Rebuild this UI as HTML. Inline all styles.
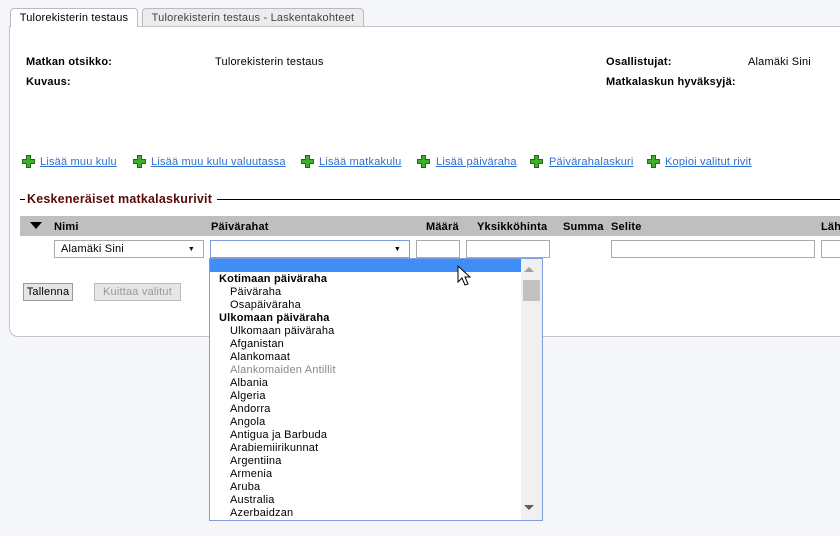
<!DOCTYPE html>
<html><head><meta charset="utf-8"><style>
*{margin:0;padding:0;box-sizing:border-box}
body{width:840px;height:536px;overflow:hidden;background:#f4f6f9;font-family:"Liberation Sans",Tahoma,sans-serif;font-size:11px;color:#000;position:relative;letter-spacing:0.2px}
.a{position:absolute;white-space:nowrap}
.b{font-weight:bold}
.tab{position:absolute;border:1px solid #bbb;border-bottom:none;border-radius:4px 4px 0 0;text-align:center;line-height:18px}
.panel{position:absolute;left:9px;top:26px;width:840px;height:311px;background:#fff;border:1px solid #c4c4c4;border-radius:0 0 0 9px}
.lnk{position:absolute;top:156px;color:#2f6fd0;text-decoration:underline;line-height:13px}
.plus{position:absolute;top:155px;width:13px;height:13px}
.inp{position:absolute;top:240px;height:18px;border:1px solid #aaa;background:#fff}
.sel{position:absolute;top:240px;height:18px;border:1px solid #aaa;background:#fff;padding-left:6px;line-height:17px}
.sel i{position:absolute;right:8px;top:0;font-style:normal;font-size:7px}
.dd{position:absolute;left:209px;top:258px;width:334px;height:263px;background:#fff;border:1px solid #7f9ddb}
.dd div{height:13px;line-height:14px;padding-left:9px}
.dd .o{padding-left:20px}
.btn{position:absolute;top:283px;height:18px;border:1px solid #999;background:#e6e6e6;line-height:17px;text-align:center}
</style></head><body>
<div class="panel"></div>
<div class="tab" style="left:10px;top:8px;width:128px;height:19px;background:#fff">Tulorekisterin testaus</div>
<div class="tab" style="left:142px;top:8px;width:222px;height:18px;background:#ececec;color:#444">Tulorekisterin testaus - Laskentakohteet</div>

<div class="a b" style="left:26px;top:56px">Matkan otsikko:</div>
<div class="a" style="left:215px;top:56px">Tulorekisterin testaus</div>
<div class="a b" style="left:26px;top:76px">Kuvaus:</div>
<div class="a b" style="left:606px;top:56px">Osallistujat:</div>
<div class="a" style="left:748px;top:56px">Alamäki Sini</div>
<div class="a b" style="left:606px;top:76px">Matkalaskun hyväksyjä:</div>

<svg width="0" height="0" style="position:absolute"><defs><symbol id="p" viewBox="0 0 13 13"><path d="M4.5 0.5h4v4h4v4h-4v4h-4v-4h-4v-4h4z" fill="#3fae2a" stroke="#1d6e12"/></symbol></defs></svg>
<svg class="plus" style="left:22px"><use href="#p"/></svg><span class="lnk" style="left:40px">Lisää muu kulu</span>
<svg class="plus" style="left:133px"><use href="#p"/></svg><span class="lnk" style="left:151px">Lisää muu kulu valuutassa</span>
<svg class="plus" style="left:301px"><use href="#p"/></svg><span class="lnk" style="left:319px">Lisää matkakulu</span>
<svg class="plus" style="left:417px"><use href="#p"/></svg><span class="lnk" style="left:436px">Lisää päiväraha</span>
<svg class="plus" style="left:530px"><use href="#p"/></svg><span class="lnk" style="left:549px">Päivärahalaskuri</span>
<svg class="plus" style="left:647px"><use href="#p"/></svg><span class="lnk" style="left:665px">Kopioi valitut rivit</span>

<div class="a" style="left:20px;top:199px;width:5px;height:1px;background:#000"></div>
<div class="a" style="left:217px;top:199px;width:623px;height:1px;background:#000"></div>
<div class="a b" style="left:27px;top:192px;font-size:12.5px;color:#5a0a0a">Keskeneräiset matkalaskurivit</div>

<div class="a" style="left:20px;top:216px;width:820px;height:20px;background:#bfbfbf"></div>
<div class="a" style="left:30px;top:222px;width:0;height:0;border-left:6px solid transparent;border-right:6px solid transparent;border-top:7px solid #000"></div>
<div class="a b" style="left:54px;top:221px">Nimi</div>
<div class="a b" style="left:211px;top:221px">Päivärahat</div>
<div class="a b" style="left:426px;top:221px">Määrä</div>
<div class="a b" style="left:477px;top:221px">Yksikköhinta</div>
<div class="a b" style="left:563px;top:221px">Summa</div>
<div class="a b" style="left:611px;top:221px">Selite</div>
<div class="a b" style="left:821px;top:221px">Läh</div>

<div class="sel" style="left:54px;width:150px">Alamäki Sini<i>▼</i></div>
<div class="sel" style="left:210px;width:200px;border-color:#7f9ddb"><i>▼</i></div>
<div class="inp" style="left:416px;width:44px"></div>
<div class="inp" style="left:466px;width:84px"></div>
<div class="inp" style="left:611px;width:204px"></div>
<div class="inp" style="left:821px;width:30px"></div>

<div class="btn" style="left:23px;width:50px">Tallenna</div>
<div class="btn" style="left:94px;width:87px;color:#999;border-color:#bbb">Kuittaa valitut</div>

<div class="dd">
<div style="background:#3f8ef7;width:311px"></div>
<div class="b">Kotimaan päiväraha</div>
<div class="o">Päiväraha</div>
<div class="o">Osapäiväraha</div>
<div class="b">Ulkomaan päiväraha</div>
<div class="o">Ulkomaan päiväraha</div>
<div class="o">Afganistan</div>
<div class="o">Alankomaat</div>
<div class="o" style="color:#888">Alankomaiden Antillit</div>
<div class="o">Albania</div>
<div class="o">Algeria</div>
<div class="o">Andorra</div>
<div class="o">Angola</div>
<div class="o">Antigua ja Barbuda</div>
<div class="o">Arabiemiirikunnat</div>
<div class="o">Argentiina</div>
<div class="o">Armenia</div>
<div class="o">Aruba</div>
<div class="o">Australia</div>
<div class="o">Azerbaidzan</div>
<span style="position:absolute;left:311px;top:0;width:21px;height:261px;background:#f0f0f0"></span>
<span style="position:absolute;left:314px;top:8px;border-left:5px solid transparent;border-right:5px solid transparent;border-bottom:5px solid #a0a0a0"></span>
<span style="position:absolute;left:313px;top:21px;width:17px;height:21px;background:#c1c1c1"></span>
<span style="position:absolute;left:314px;top:246px;border-left:5px solid transparent;border-right:5px solid transparent;border-top:5px solid #606060"></span>
</div>
<svg class="a" style="left:457px;top:265px" width="14" height="22" viewBox="0 0 14 22"><path d="M1 1v16l4-4 3 7 3-1-3-7h5z" fill="#fff" stroke="#000"/></svg>
</body></html>
